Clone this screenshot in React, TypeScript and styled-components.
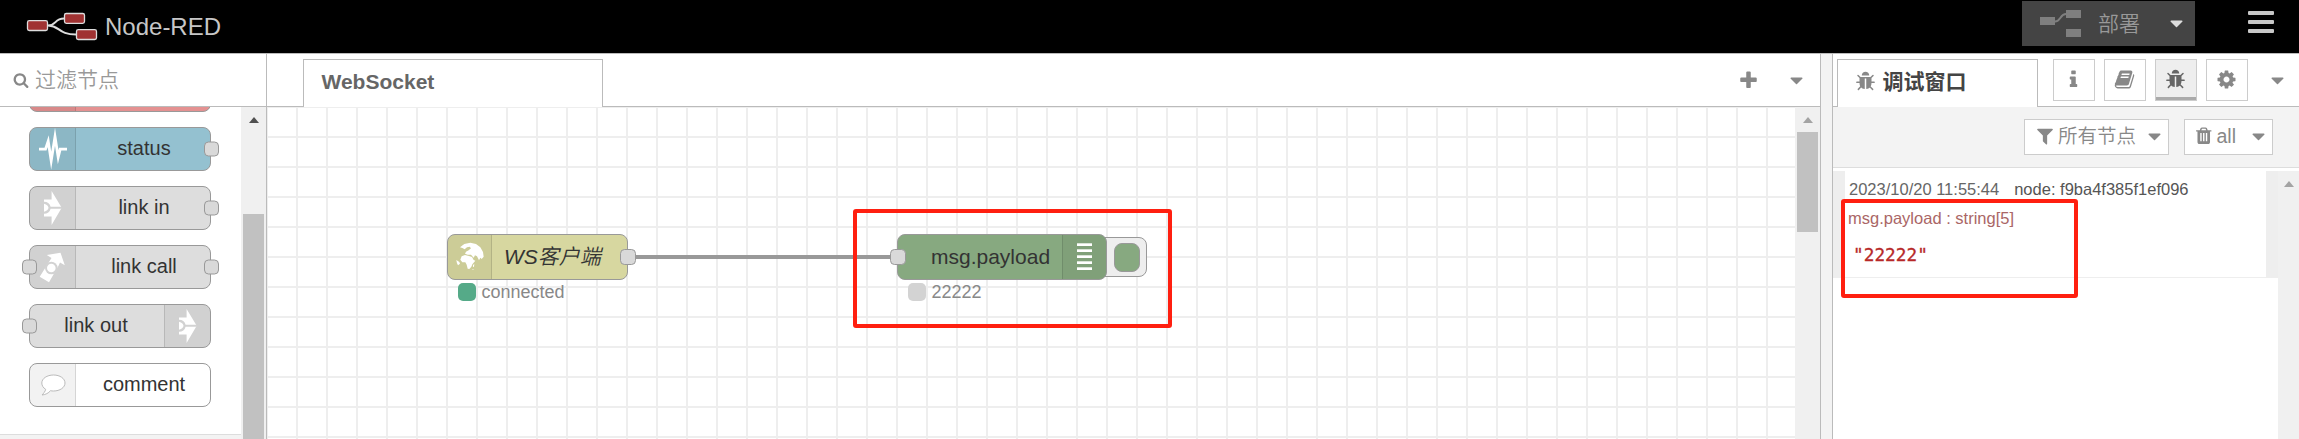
import React from "react";
import styled, { createGlobalStyle, css } from "styled-components";

const sans = `"Liberation Sans", Arial, "Noto Sans CJK SC", sans-serif`;

const GlobalStyle = createGlobalStyle`
  * { box-sizing: border-box; }
  body { margin: 0; background: #fff; font-family: ${sans}; overflow: hidden; }
`;

/* ---------- glyphs ---------- */

const glyphs = {
  plus: "M1600 736v192q0 40-28 68t-68 28h-416v416q0 40-28 68t-68 28h-192q-40 0-68-28t-28-68v-416h-416q-40 0-68-28t-28-68v-192q0-40 28-68t68-28h416v-416q0-40 28-68t68-28h192q40 0 68 28t28 68v416h416q40 0 68 28t28 68z",
  filter: "M1595 295q17 41-14 70l-493 493v742q0 42-39 59-13 5-25 5-27 0-45-19l-256-256q-19-19-19-45v-486l-493-493q-31-29-14-70 17-39 59-39h1280q42 0 59 39z",
  search: "M1216 832q0-185-131.500-316.500t-316.500-131.500-316.500 131.500-131.500 316.500 131.500 316.500 316.500 131.500 316.500-131.500 131.500-316.500zm512 832q0 52-38 90t-90 38q-54 0-90-38l-343-342q-179 124-399 124-143 0-273.500-55.500t-225-150-150-225-55.500-273.500 55.500-273.500 150-225 225-150 273.500-55.500 273.500 55.500 225 150 150 225 55.500 273.500q0 220-124 399l343 343q37 37 37 90z",
  cog: "M1152 896q0-106-75-181t-181-75-181 75-75 181 75 181 181 75 181-75 75-181zm512-109v222q0 12-8 23t-20 13l-185 28q-19 54-39 91 35 50 107 138 10 12 10 25t-9 23q-27 37-99 108t-94 71q-12 0-26-9l-138-108q-44 23-91 38-16 136-29 186-7 28-36 28h-222q-14 0-24.500-8.500t-11.500-21.500l-28-184q-49-16-90-37l-141 107q-10 9-25 9-14 0-25-11-126-114-165-168-7-10-7-23 0-12 8-23 15-21 51-66.500t54-70.500q-27-50-41-99l-183-27q-13-2-21-12.500t-8-23.500v-222q0-12 8-23t19-13l186-28q14-46 39-92-40-57-107-138-10-12-10-24 0-10 9-23 26-36 98.500-107.500t94.500-71.500q13 0 26 10l138 107q44-23 91-38 16-136 29-186 7-28 36-28h222q14 0 24.500 8.500t11.500 21.500l28 184q49 16 90 37l142-107q9-9 24-9 13 0 25 10 129 119 165 170 7 8 7 22 0 12-8 23-15 21-51 66.500t-54 70.500q26 50 41 98l183 28q13 2 21 12.500t8 23.500z",
  info: "M1216 1344v128q0 26-19 45t-45 19h-512q-26 0-45-19t-19-45v-128q0-26 19-45t45-19h64v-384h-64q-26 0-45-19t-19-45v-128q0-26 19-45t45-19h384q26 0 45 19t19 45v576h64q26 0 45 19t19 45zm-128-1152v192q0 26-19 45t-45 19h-256q-26 0-45-19t-19-45v-192q0-26 19-45t45-19h256q26 0 45 19t19 45z",
  bug: "M1696 960q0 26-19 45t-45 19h-224q0 171-67 290l208 209q19 19 19 45t-19 45q-18 19-45 19t-45-19l-198-197q-5 5-15 13t-42 28.500-65 36.500-82 29-97 13v-896h-128v896q-51 0-101.500-13.500t-87-33-66-39-43.500-32.500l-15-14-183 207q-20 21-48 21-24 0-43-16-19-18-20.500-44.500t15.500-46.500l202-227q-58-114-58-274h-224q-26 0-45-19t-19-45 19-45 45-19h224v-294l-173-173q-19-19-19-45t19-45 45-19 45 19l173 173h844l173-173q19-19 45-19t45 19 19 45-19 45l-173 173v294h224q26 0 45 19t19 45zm-480-576h-640q0-133 93.500-226.500t226.500-93.500 226.500 93.500 93.500 226.500z",
  trash: "M704 1376v-704q0-14-9-23t-23-9h-64q-14 0-23 9t-9 23v704q0 14 9 23t23 9h64q14 0 23-9t9-23zm256 0v-704q0-14-9-23t-23-9h-64q-14 0-23 9t-9 23v704q0 14 9 23t23 9h64q14 0 23-9t9-23zm256 0v-704q0-14-9-23t-23-9h-64q-14 0-23 9t-9 23v704q0 14 9 23t23 9h64q14 0 23-9t9-23zm-544-992h448l-48-117q-7-9-17-11h-317q-10 2-17 11zm928 32v64q0 14-9 23t-23 9h-96v948q0 83-47 143.500t-113 60.500h-832q-66 0-113-58.500t-47-141.500v-952h-96q-14 0-23-9t-9-23v-64q0-14 9-23t23-9h309l70-167q15-37 54-63t79-26h320q40 0 79 26t54 63l70 167h309q14 0 23 9t9 23z",
  book: "M1703 478q40 57 18 129l-275 906q-19 64-76.500 107.500t-122.500 43.500h-923q-77 0-148.500-53.500t-99.500-131.500q-24-67-2-127 0-4 3-27t4-37q1-8-3-21.500t-3-19.500q2-11 8-21t16.500-23.500 16.500-23.500q23-38 45-91.500t30-91.500q3-10 .5-30t-.5-28q3-11 17-28t17-23q21-36 42-92t25-90q1-9-2.500-32t.5-28q4-13 22-30.500t22-22.500q19-26 42.500-84.500t27.500-96.500q1-8-3-25.500t-2-26.500q2-8 9-18t18-23 17-21q8-12 16.500-30.500t15-35 16-36 19.500-32 26.500-23.500 36-11.500 47.500 5.500l-1 3q38-9 51-9h761q74 0 114 56t18 130l-274 906q-36 119-71.500 153.500t-128.500 34.500h-869q-27 0-38 15-11 16-1 43 24 70 144 70h923q29 0 56-15.500t35-41.500l300-987q7-22 5-57 38 15 59 43zm-1064 2q-4 13 2 22.500t20 9.500h608q13 0 25.500-9.500t16.500-22.500l21-64q4-13-2-22.500t-20-9.500h-608q-13 0-25.500 9.500t-16.500 22.500zm-83 256q-4 13 2 22.500t20 9.500h608q13 0 25.500-9.500t16.500-22.500l21-64q4-13-2-22.500t-20-9.500h-608q-13 0-25.500 9.500t-16.500 22.500z",
  caret: "M1408 704q0 26-19 45l-448 448q-19 19-45 19t-45-19l-448-448q-19-19-19-45t19-45 45-19h896q26 0 45 19t19 45z",
};

const GlyphSvg = styled.svg<{ $size: number }>`
  width: ${(p) => p.$size}px;
  height: ${(p) => p.$size}px;
  fill: currentColor;
  flex: none;
  display: block;
`;

const Glyph = ({ name, size = 21 }: { name: keyof typeof glyphs; size?: number }) => (
  <GlyphSvg $size={size} viewBox="0 0 1792 1792">
    <path d={glyphs[name]} />
  </GlyphSvg>
);

const Logo = () => (
  <svg width="72" height="30" viewBox="26 12 72 30" fill="none">
    <path d="M48 25.500C57 25.500 54 18.500 64 18.500M48 25.500C60 25.500 58 34.500 76 34.500" stroke="#ddd" strokeWidth="2" />
    <g fill="#a03232" stroke="#ddd" strokeWidth="1.300">
      <rect x="27.500" y="20.700" width="20" height="9.800" rx="1.800" />
      <rect x="64.500" y="13.500" width="20" height="9.800" rx="1.800" />
      <rect x="76.500" y="29.700" width="20" height="9.800" rx="1.800" />
    </g>
  </svg>
);

const DeployIcon = () => (
  <svg width="42" height="28" viewBox="0 0 42 28">
    <g fill="#7f7f7f">
      <rect y="7" width="15" height="8" />
      <rect x="26" width="15" height="8" />
      <rect x="26" y="19" width="15" height="8" />
    </g>
    <path d="M15 11.500c6 0 5-7.500 11-7.500" stroke="#7f7f7f" strokeWidth="2" fill="none" />
  </svg>
);

const StatusIcon = () => (
  <svg width="30" height="42" viewBox="0 0 30 42">
    <path d="M1 21.200h6.500l2.700-8 3 19.500 3.800-24 3.200 20.500 2-8h6.800" fill="none" stroke="#fff" strokeWidth="2.800" strokeMiterlimit="12" />
  </svg>
);

const LinkIcon = ({ back = "#d2d2d2" }) => (
  <svg width="20" height="38" viewBox="0 0 20 38">
    <path d="M1 10.500h7.600V2l10.100 16.800L8.600 36v-8.500H1z" fill="#fff" />
    <path d="M1 12.800c3.500 0 5.700 1.800 6.600 5h12v2h-12c-.9 3.200-3.100 5-6.600 5v-2c6-2 6-6 0-8z" fill={back} />
  </svg>
);

const LinkCallIcon = () => (
  <svg width="30" height="34" viewBox="38 249 30 34">
    <path d="M39.700 275.800L49 281.300 58.500 264.800 60 261.500 64.800 264.200 60.500 251.700 46.800 254 51.500 257z" fill="#fff" />
    <circle cx="51.300" cy="267" r="6.300" fill="#d2d2d2" />
    <circle cx="51.300" cy="267" r="4.300" fill="#fff" />
  </svg>
);

const CommentIcon = () => (
  <svg width="28" height="26" viewBox="0 0 28 26">
    <path d="M14.500 3C21 3 26 6.500 26 11s-5 8-11.500 8c-1 0-2 0-3-.3-2 2.300-4.700 4-8.500 4.300 1.500-1.500 3.200-3.500 3.700-5.700C4.300 16 2.800 13.600 2.800 11c0-4.500 5.200-8 11.700-8z" fill="#fff" stroke="#bbb" />
  </svg>
);

const GlobeIcon = () => (
  <svg width="30" height="30" viewBox="34 36 86 90" fill="#fff">
    <path d="M47 52L60 42 78 38 95 42 108 52 116 66 118 80 112 87 108 83 104 91 98 79 92 76 88 83 80 74 70 74 62 71 65 65 73 61 80 55 76 50 68 52 61 58 54 54z" />
    <path d="M52 79L62 75 74 78 83 81 88 90 93 92 84 103 81 110 75 117 70 116 67 104 63 97 54 97 48 89z" />
    <path d="M36 90l9 6 2 5-6 5q-4-6-5-16zM86 105l4-3-1 8-3 1zM82 119l8-2-4 3z" />
  </svg>
);

const ListIcon = () => (
  <svg width="15" height="28" viewBox="0 0 15 28">
    {[0, 6, 12, 18, 24].map((y) => (
      <rect key={y} y={y + 0.3} width="15" height="2.700" fill="#fff" />
    ))}
  </svg>
);

/* ---------- header ---------- */

const Page = styled.div`
  width: 2299px;
  height: 439px;
  display: flex;
  flex-direction: column;
  overflow: hidden;
`;

const Header = styled.header`
  height: 54px;
  flex: none;
  background: #000;
  border-bottom: 1px solid #bbb;
  display: flex;
  align-items: flex-start;
`;

const Brand = styled.div`
  display: flex;
  align-items: flex-start;
  padding: 12px 0 0 26px;
  gap: 7px;
  flex: 1;
  color: #c7c7c7;
  font-size: 24px;
  line-height: 30px;
`;

const DeployButton = styled.div`
  width: 173px;
  height: 45px;
  margin-top: 1px;
  background: #444;
  color: #999;
  display: flex;
  align-items: center;
  padding-left: 18px;
  font-size: 21px;
  font-weight: 350;
  line-height: 45px;
`;

const DeployLabel = styled.span`
  margin: 0 26px 0 16px;
`;

const DeployCaret = styled.span`
  color: #ddd;
`;

const MenuBars = styled.div`
  width: 26px;
  height: 22px;
  margin: 11px 25px 0 53px;
  display: flex;
  flex-direction: column;
  justify-content: space-between;
`;

const MenuBar = styled.span`
  height: 4px;
  border-radius: 1px;
  background: #c7c7c7;
`;

/* ---------- shared parts ---------- */

const Body = styled.div`
  flex: 1;
  display: flex;
  min-height: 0;
`;

const Track = styled.div<{ $width: number }>`
  width: ${(p) => p.$width}px;
  flex: none;
  background: #f0f0f0;
  display: flex;
  flex-direction: column;
  align-items: center;
`;

const TrackArrow = styled.i<{ $color: string; $top?: number }>`
  margin-top: ${(p) => p.$top ?? 10}px;
  border: 5.500px solid transparent;
  border-top: 0;
  border-bottom: 6px solid ${(p) => p.$color};
`;

const Thumb = styled.div<{ $height: number; $top: number }>`
  width: 21px;
  height: ${(p) => p.$height}px;
  margin-top: ${(p) => p.$top}px;
  flex: none;
  background: #c1c1c1;
`;

/* ---------- palette ---------- */

const Palette = styled.aside`
  width: 267px;
  flex: none;
  border-right: 1px solid #bbb;
  display: flex;
  flex-direction: column;
`;

const Search = styled.div`
  height: 53px;
  flex: none;
  border-bottom: 1px solid #bbb;
  display: flex;
  align-items: center;
  gap: 6px;
  padding-left: 13px;
  color: #888;
  font-size: 21px;
`;

const SearchText = styled.span`
  color: #999;
  font-weight: 350;
  line-height: 50px;
`;

const PaletteScroll = styled.div`
  flex: 1;
  display: flex;
  min-height: 0;
`;

const Category = styled.div`
  flex: 1;
  display: flex;
  flex-direction: column;
  overflow: hidden;
`;

const NodeList = styled.div`
  height: 328px;
  flex: none;
  padding-left: 29px;
  display: flex;
  flex-direction: column;
  justify-content: flex-end;
  gap: 15px;
  padding-bottom: 27px;
  border-bottom: 1px solid #ddd;
  overflow: hidden;
`;

const CategoryHeader = styled.div`
  flex: 1;
  background: #f3f3f3;
`;

const PaletteNode = styled.div<{ $fill: string; $flip?: boolean }>`
  position: relative;
  width: 182px;
  height: 44px;
  flex: none;
  display: flex;
  flex-direction: ${(p) => (p.$flip ? "row-reverse" : "row")};
  background: ${(p) => p.$fill};
  border: 1px solid #999;
  border-radius: 8px;
  color: #333;
  font-size: 20px;
`;

const iconSide = css<{ $flip?: boolean }>`
  ${(p) => (p.$flip ? "border-left" : "border-right")}: 1px solid rgba(0, 0, 0, 0.12);
  border-radius: ${(p) => (p.$flip ? "0 7px 7px 0" : "7px 0 0 7px")};
`;

const IconCell = styled.div<{ $flip?: boolean; $width?: number }>`
  width: ${(p) => p.$width ?? 46}px;
  flex: none;
  background: rgba(0, 0, 0, 0.05);
  display: flex;
  align-items: center;
  justify-content: center;
  ${iconSide}
`;

const NodeLabel = styled.span<{ $flip?: boolean }>`
  flex: 1;
  ${(p) => (p.$flip ? "padding-right: 2px;" : "padding-left: 2px;")}
  text-align: center;
  line-height: 41px;
`;

const Port = styled.i<{ $side: "left" | "right"; $size?: number }>`
  position: absolute;
  top: 50%;
  ${(p) => p.$side}: -8.5px;
  width: ${(p) => p.$size ?? 15}px;
  height: ${(p) => p.$size ?? 15}px;
  transform: translateY(-50%);
  background: #d9d9d9;
  border: 1px solid #999;
  border-radius: 4.500px;
`;

type PaletteItem = {
  label: string;
  fill: string;
  icon?: React.ReactNode;
  flip?: boolean;
  ports: ("left" | "right")[];
};

const paletteItems: PaletteItem[] = [
  { label: "", fill: "#e49191", ports: [] },
  { label: "status", fill: "#94c1d0", icon: <StatusIcon />, ports: ["right"] },
  { label: "link in", fill: "#ddd", icon: <LinkIcon />, ports: ["right"] },
  { label: "link call", fill: "#ddd", icon: <LinkCallIcon />, ports: ["left", "right"] },
  { label: "link out", fill: "#ddd", icon: <LinkIcon />, flip: true, ports: ["left"] },
  { label: "comment", fill: "#fff", icon: <CommentIcon />, ports: [] },
];

/* ---------- workspace ---------- */

const Workspace = styled.main`
  width: 1554px;
  flex: none;
  border-right: 1px solid #bbb;
  display: flex;
  flex-direction: column;
`;

const TabBar = styled.div`
  height: 53px;
  flex: none;
  display: flex;
  align-items: stretch;
  background: #fff;
`;

const TabGap = styled.div<{ $width?: number }>`
  ${(p) => (p.$width ? `width: ${p.$width}px; flex: none;` : "flex: 1;")}
  border-bottom: 1px solid #bbb;
  display: flex;
  align-items: center;
  justify-content: flex-end;
  color: #888;
`;

const FlowTab = styled.div`
  width: 300px;
  margin-top: 5px;
  border: 1px solid #bbb;
  border-bottom: 0;
  padding-left: 17.500px;
  color: #666;
  font-size: 21px;
  font-weight: bold;
  line-height: 43px;
`;

const TabActions = styled.div`
  display: flex;
  align-items: center;
  gap: 27px;
  padding: 0 13px 0 0;
`;

const CanvasRow = styled.div`
  flex: 1;
  display: flex;
`;

const Canvas = styled.div`
  position: relative;
  width: 1528px;
  background-color: #fff;
  background-image: linear-gradient(to right, #eee 2px, transparent 2px),
    linear-gradient(to bottom, #eee 2px, transparent 2px);
  background-size: 30px 30px;
  background-position: -1px -1px;
`;

const Placed = styled.div<{ $x: number; $y: number }>`
  position: absolute;
  left: ${(p) => p.$x}px;
  top: ${(p) => p.$y}px;
`;

const Wire = styled(Placed)`
  width: 262px;
  height: 4px;
  background: #999;
`;

const FlowNode = styled(Placed)<{ $fill: string; $width: number }>`
  width: ${(p) => p.$width}px;
  height: 46px;
  display: flex;
  background: ${(p) => p.$fill};
  border: 1.500px solid #999;
  border-radius: 8px;
  color: #333;
  font-size: 21px;
`;

const FlowLabel = styled.span<{ $indent: number; $italic?: boolean }>`
  flex: 1;
  padding-left: ${(p) => p.$indent}px;
  font-style: ${(p) => (p.$italic ? "italic" : "normal")};
  font-weight: ${(p) => (p.$italic ? 350 : 400)};
  line-height: 43px;
  white-space: nowrap;
`;

const ToggleButton = styled(Placed)`
  width: 55px;
  height: 40px;
  border: 1px solid #999;
  border-radius: 8px;
  background: #eee;
  display: flex;
  align-items: center;
  justify-content: flex-end;
  padding-right: 6px;
`;

const ToggleFace = styled.span`
  width: 26px;
  height: 29px;
  border: 1.500px solid #999;
  border-radius: 8px;
  background: #87a980;
`;

const NodeStatus = styled(Placed)`
  display: flex;
  align-items: center;
  gap: 5.500px;
  color: #888;
  font-size: 18px;
  line-height: 20px;
`;

const StatusDot = styled.i<{ $color: string }>`
  width: 18px;
  height: 18px;
  border-radius: 5px;
  background: ${(p) => p.$color};
`;

const Marker = styled(Placed)<{ $w: number; $h: number }>`
  width: ${(p) => p.$w}px;
  height: ${(p) => p.$h}px;
  border: 4px solid #ff1f10;
  border-radius: 3px;
`;

/* ---------- sidebar ---------- */

const Separator = styled.div`
  width: 11px;
  flex: none;
  background: #f3f3f3;
`;

const Sidebar = styled.aside`
  position: relative;
  flex: 1;
  border-left: 1px solid #bbb;
  display: flex;
  flex-direction: column;
`;

const SideTab = styled.div`
  width: 201px;
  margin-top: 5px;
  border: 1px solid #bbb;
  border-bottom: 0;
  display: flex;
  align-items: center;
  gap: 6.500px;
  padding: 0 0 4px 17px;
  color: #888;
`;

const SideTitle = styled.span`
  color: #444;
  font-size: 21px;
  font-weight: bold;
  line-height: 40px;
`;

const SideButtons = styled.div`
  display: flex;
  align-items: center;
  gap: 9px;
  padding: 0 11px 3px 0;
`;

const IconButton = styled.span<{ $active?: boolean }>`
  width: 42px;
  height: 42px;
  margin-top: 3px;
  border: 1px solid #ccc;
  background: ${(p) => (p.$active ? "#eee" : "#fff")};
  color: ${(p) => (p.$active ? "#666" : "#888")};
  display: flex;
  align-items: center;
  justify-content: center;
  ${(p) => p.$active && "box-shadow: inset 0 -3px 0 #aaa;"}
  padding: 0 1px 2px 0;
`;

const CaretSlot = styled.span`
  margin: 3px 0 0 10px;
`;

const FilterBar = styled.div`
  height: 61px;
  flex: none;
  background: #f3f3f3;
  border-bottom: 1px solid #ddd;
  display: flex;
  justify-content: flex-end;
  gap: 15px;
  padding: 12px 26px 0 0;
`;

const FilterButton = styled.span<{ $width: number; $pad: number }>`
  width: ${(p) => p.$width}px;
  height: 36px;
  border: 1px solid #ccc;
  background: #fff;
  color: #888;
  display: flex;
  align-items: center;
  padding: 0 3px 2px ${(p) => p.$pad}px;
  font-size: 19.500px;
  line-height: 32px;
  white-space: nowrap;
`;

const FilterLabel = styled.span`
  flex: 1;
  padding-left: 3px;
  font-weight: 350;
`;

const Messages = styled.div`
  flex: 1;
  padding-top: 3px;
  display: flex;
  align-items: stretch;
`;

const MessageColumn = styled.div`
  flex: 1;
`;

const Message = styled.div`
  height: 107px;
  border: solid #eee;
  border-width: 0 12px 1px 12px;
  padding: 8px 0 0 3px;
`;

const Meta = styled.div`
  display: flex;
  gap: 15px;
  padding-left: 1px;
  color: #666;
  font-size: 16.500px;
  line-height: 21px;
`;

const NodeId = styled.span`
  color: #555;
`;

const Topic = styled.div`
  margin-top: 8px;
  color: #a66;
  font-size: 16.500px;
  line-height: 21px;
`;

const Payload = styled.div`
  margin: 15px 0 0 5px;
  color: #b72828;
  font-family: "DejaVu Sans Mono", monospace;
  font-size: 17.800px;
  line-height: 22px;
  -webkit-text-stroke: 0.3px #b72828;
`;

export default function App() {
  return (
    <Page>
      <GlobalStyle />
      <Header>
        <Brand>
          <Logo />
          <span>Node-RED</span>
        </Brand>
        <DeployButton>
          <DeployIcon />
          <DeployLabel>部署</DeployLabel>
          <DeployCaret>
            <Glyph name="caret" />
          </DeployCaret>
        </DeployButton>
        <MenuBars>
          <MenuBar />
          <MenuBar />
          <MenuBar />
        </MenuBars>
      </Header>
      <Body>
        <Palette>
          <Search>
            <Glyph name="search" size={16} />
            <SearchText>过滤节点</SearchText>
          </Search>
          <PaletteScroll>
            <Category>
              <NodeList>
                {paletteItems.map((n, i) => (
                  <PaletteNode key={i} $fill={n.fill} $flip={n.flip}>
                    <IconCell $flip={n.flip}>{n.icon}</IconCell>
                    <NodeLabel $flip={n.flip}>{n.label}</NodeLabel>
                    {n.ports.map((side) => (
                      <Port key={side} $side={side} />
                    ))}
                  </PaletteNode>
                ))}
              </NodeList>
              <CategoryHeader />
            </Category>
            <Track $width={25}>
              <TrackArrow $color="#505050" />
              <Thumb $height={240} $top={91} />
            </Track>
          </PaletteScroll>
        </Palette>

        <Workspace>
          <TabBar>
            <TabGap $width={36} />
            <FlowTab>WebSocket</FlowTab>
            <TabGap>
              <TabActions>
                <Glyph name="plus" />
                <Glyph name="caret" />
              </TabActions>
            </TabGap>
          </TabBar>
          <CanvasRow>
            <Canvas>
              <Wire $x={364} $y={148} />
              <FlowNode $x={180} $y={127} $width={181} $fill="#d7d7a0">
                <IconCell $width={44}>
                  <GlobeIcon />
                </IconCell>
                <FlowLabel $indent={12} $italic>
                  WS客户端
                </FlowLabel>
                <Port $side="right" $size={16} />
              </FlowNode>
              <NodeStatus $x={191} $y={175}>
                <StatusDot $color="#55aa88" />
                connected
              </NodeStatus>
              <ToggleButton $x={825} $y={130}>
                <ToggleFace />
              </ToggleButton>
              <FlowNode $x={630} $y={127} $width={210} $fill="#87a980">
                <FlowLabel $indent={33}>msg.payload</FlowLabel>
                <IconCell $flip $width={44}>
                  <ListIcon />
                </IconCell>
                <Port $side="left" $size={16} />
              </FlowNode>
              <NodeStatus $x={641} $y={175}>
                <StatusDot $color="#d3d3d3" />
                22222
              </NodeStatus>
              <Marker $x={586} $y={102} $w={319} $h={119} />
            </Canvas>
            <Track $width={25}>
              <TrackArrow $color="#a3a3a3" />
              <Thumb $height={100} $top={9} />
            </Track>
          </CanvasRow>
        </Workspace>

        <Separator />

        <Sidebar>
          <TabBar>
            <TabGap $width={4} />
            <SideTab>
              <Glyph name="bug" />
              <SideTitle>调试窗口</SideTitle>
            </SideTab>
            <TabGap>
              <SideButtons>
                <IconButton>
                  <Glyph name="info" />
                </IconButton>
                <IconButton>
                  <Glyph name="book" />
                </IconButton>
                <IconButton $active>
                  <Glyph name="bug" />
                </IconButton>
                <IconButton>
                  <Glyph name="cog" />
                </IconButton>
                <CaretSlot>
                  <Glyph name="caret" />
                </CaretSlot>
              </SideButtons>
            </TabGap>
          </TabBar>
          <FilterBar>
            <FilterButton $width={145} $pad={10}>
              <Glyph name="filter" size={20} />
              <FilterLabel>所有节点</FilterLabel>
              <Glyph name="caret" />
            </FilterButton>
            <FilterButton $width={89} $pad={9}>
              <Glyph name="trash" size={19.5} />
              <FilterLabel>all</FilterLabel>
              <Glyph name="caret" />
            </FilterButton>
          </FilterBar>
          <Messages>
            <MessageColumn>
              <Message>
                <Meta>
                  <span>2023/10/20 11:55:44</span>
                  <NodeId>node: f9ba4f385f1ef096</NodeId>
                </Meta>
                <Topic>msg.payload : string[5]</Topic>
                <Payload>"22222"</Payload>
              </Message>
            </MessageColumn>
            <Track $width={21}>
              <TrackArrow $color="#a3a3a3" />
            </Track>
          </Messages>
          <Marker $x={8} $y={145} $w={237} $h={99} />
        </Sidebar>
      </Body>
    </Page>
  );
}
